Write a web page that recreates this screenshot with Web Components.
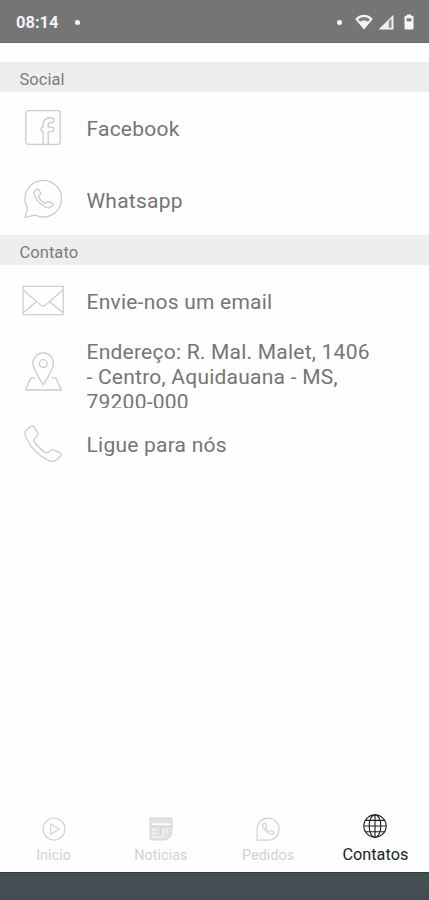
<!DOCTYPE html>
<html lang="pt-BR">
<head>
<meta charset="utf-8">
<title>Contatos</title>
<style>
html,body{margin:0;height:100%;background:#fefefe;overflow:hidden}
</style>
</head>
<body>
<contact-app></contact-app>
<script>
const HANDSET = 'M9 3.2 L4 7.3 C2 9.5 3.2 13 5 16.5 C9 24.5 16.5 32 24 36.3 C29 39 32.5 39.3 35 36.5 L38.6 33 C39.6 31.5 38.8 30.2 37.3 29.3 L31.5 27 C29.5 26.3 28.3 27 27.2 28.6 C26.2 30.2 24.7 30.4 23 29.3 C18.5 26.5 15 22.8 12.3 18.6 C11.3 17 11.5 16 12.8 14.9 L15.4 12.8 C16.4 11.8 16.3 10.6 15.7 9.4 L12 3.8 C11.2 2.6 10.1 2.4 9 3.2 Z';
const ICONS = {
  facebook: ['0 0 42 42', '<g fill="none" stroke="currentColor" stroke-width="1.3"><rect x="3.8" y="3.7" width="34.4" height="33.6" rx="2.5"/><path d="M21.2 37V24.9Q19 24.6 19 22.5T21.2 20.2V18c0-4.8 2.5-7 6.3-7h2.4q2.2.2 2.2 2.3T30 15.6h-1.8c-1.6 0-2.1.6-2.1 2.4v2.1h3.8q2 .2 1.9 2.3t-2.2 2.3h-3.4v12.4"/></g>'],
  whatsapp: ['0 0 42 42', '<path d="M3.1 39.4 5.5 30A18.3 18.3 0 1 1 13.3 37.2Z" fill="none" stroke="currentColor" stroke-width="1.3" stroke-linejoin="round"/><path transform="translate(10.2 9.5) scale(.53)" d="' + HANDSET + '" fill="none" stroke="currentColor" stroke-width="2.5"/>'],
  email: ['0 0 42 42', '<g fill="none" stroke="currentColor" stroke-width="1.2"><rect x="1" y="6.3" width="40.2" height="28.4"/><path d="M1.5 10 17.8 24.4Q21.2 27.2 24.5 24.4L40.7 10M1.5 32.5 14.5 21.8M40.7 32.5 27.6 21.8"/></g>'],
  map: ['0 0 42 42', '<g fill="none" stroke="currentColor" stroke-width="1.3" stroke-linejoin="round"><path d="M21.2 33.6C17 26.5 10.9 18.5 10.9 12.2a10.3 10.3 0 0 1 20.6 0C31.5 18.5 25.4 26.5 21.2 33.6Z"/><circle cx="21.2" cy="12.6" r="3.9"/><path d="M13 26.9H8.8L3.3 39h36L33.8 26.9H29.4"/></g>'],
  phone: ['0 0 42 42', '<path d="' + HANDSET + '" fill="none" stroke="currentColor" stroke-width="1.3" stroke-linejoin="round"/>'],
  play: ['0 0 24 24', '<g fill="none" stroke="currentColor" stroke-width="1.2" stroke-linejoin="round"><circle cx="12" cy="12" r="11"/><path d="M8.7 6.8v10.4l8.8-5.2Z"/></g>'],
  news: ['0 0 24 24', '<path d="M1 1H23V16Q22 21 17 23H2.5Q1 23 1 21Z" fill="currentColor" opacity=".65"/><path d="M3 7.3H21" stroke="#fefefe" stroke-width="1.7"/><path d="M3 12.8h5M3 16.5h5M3 20h11M14.2 11v8M18 12v5" stroke="#fefefe" stroke-width=".9" fill="none"/><path d="M1 1H23V16Q22 21 17 23H2.5Q1 23 1 21ZM1 9.5H23M11.5 10v8" fill="none" stroke="currentColor" stroke-width=".9"/>'],
  chat: ['0 0 42 42', '<path d="M2 40.5V21A19.3 19.3 0 1 1 21 40.5Z" fill="none" stroke="currentColor" stroke-width="2"/><path transform="translate(9.5 9) scale(.56)" d="' + HANDSET + '" fill="none" stroke="currentColor" stroke-width="3.6"/>'],
  globe: ['0 0 24 24', '<g fill="none" stroke="currentColor" stroke-width="1.15"><circle cx="12" cy="12" r="11.2"/><path d="M12 .8v22.4M.8 12h22.4M2.6 6.3h18.8M2.6 17.7h18.8"/><ellipse cx="12" cy="12" rx="5.8" ry="11.2"/></g>'],
  wifi: ['0 0 18 16', '<path d="M9 15.5 .6 5.5C-.2 4.5 4 .8 9 .8S18.2 4.5 17.4 5.5Z" fill="#f4f4f4"/><path d="M3 5.2Q9 .6 15 5.2L13 7.8Q9 5.2 5 7.8Z" fill="#808080"/>'],
  signal: ['0 0 16 16', '<path d="M.5 15.5 15.5.8V15.5Z" fill="#f0f0f0"/><path d="M10.8 7.2 13.5 4.5V13.8H10.8Z" fill="#8c8c8c"/>'],
  battery: ['0 0 10 16', '<path d="M3 .5h4v1.3h1.2q1.3 0 1.3 1.3v11.1q0 1.3-1.3 1.3H1.8Q.5 15.5.5 14.2V3.1q0-1.3 1.3-1.3H3Z" fill="#f6f6f6"/><path d="M2.6 4.3H7.4V7.4H2.6Z" fill="#777"/>']
};

function define(name, css, html, setup) {
  const template = document.createElement('template');
  template.innerHTML = '<style>' + css + '</style>' + html;
  customElements.define(name, class extends HTMLElement {
    connectedCallback() {
      if (this.shadowRoot) return;
      this.attachShadow({mode: 'open'}).append(template.content.cloneNode(true));
      if (setup) setup(this, this.shadowRoot);
    }
  });
}

function insertIcon(host, root) {
  const icon = document.createElement('line-icon');
  icon.setAttribute('name', host.getAttribute('icon'));
  root.querySelector('.icon').replaceWith(icon);
}

define('line-icon', ':host{display:block;width:42px;height:42px;flex:none}svg{display:block;width:100%;height:100%}',
  '<svg aria-hidden="true"></svg>', (host, root) => {
    const icon = ICONS[host.getAttribute('name')];
    const svg = root.querySelector('svg');
    svg.setAttribute('viewBox', icon[0]);
    svg.innerHTML = icon[1];
  });

define('status-bar', `
  :host{display:flex;align-items:center;box-sizing:border-box;height:43px;padding:2px 15px 0 16px;background:#757575;border-bottom:1px solid #686868;color:#f4f4f4;font:700 16.5px/20px Roboto,sans-serif;flex:none}
  .time{padding-top:2px}
  .dot{width:5px;height:5px;border-radius:50%;background:#f5f5f5}
  .left{margin-left:16px}.right{margin-left:auto}
  .wifi{width:18px;height:16px;margin-left:13px}
  .signal{width:16px;height:16px;margin-left:5px}
  .battery{width:10px;height:16px;margin-left:10px}`,
  '<span class="time"><slot></slot></span><i class="dot left"></i><i class="dot right"></i><line-icon class="wifi" name="wifi"></line-icon><line-icon class="signal" name="signal"></line-icon><line-icon class="battery" name="battery"></line-icon>');

define('section-title', ':host{display:block;box-sizing:border-box;height:30px;padding:5px 20px 0 19.5px;background:#eee;color:#7c7c7c;font:400 16.5px/25px Roboto,sans-serif;letter-spacing:.05px;flex:none}', '<slot></slot>');

define('contact-row', `
  :host{display:flex;align-items:center;box-sizing:border-box;height:71.6px;padding:0 50px 0 22px;gap:22.5px;color:#757575;font:400 21px/25px Roboto,sans-serif;letter-spacing:.23px;overflow:hidden;flex:none}
  line-icon{color:#cbcbcb}
  .text{padding-top:3px}
  :host([tall]){align-items:flex-start}
  :host([tall]) line-icon{margin-top:14px}
  :host([icon=whatsapp]) .text{padding-top:4px}`,
  '<span class="icon"></span><div class="text"><slot></slot></div>', insertIcon);

define('nav-item', `
  :host{display:flex;flex-direction:column;align-items:center;flex:1 1 0;color:#d2d2d2;font:400 14.3px/18px Roboto,sans-serif;letter-spacing:.1px;padding-top:5px;gap:5px}
  line-icon{width:24px;height:24px}
  :host([active]){color:#222;font-size:16.3px;letter-spacing:0;padding-top:2px;gap:8px}`,
  '<span class="icon"></span><span><slot></slot></span>', insertIcon);

define('tab-bar', ':host{display:flex;height:60px;flex:none;background:#fefefe}', '<slot></slot>');

define('contact-app', `
  :host{display:flex;flex-direction:column;height:900px;width:100%;background:#fefefe}
  main{flex:1;padding-top:19px;display:flex;flex-direction:column}
  footer{height:28px;box-sizing:border-box;background:linear-gradient(#445051,#454b55) no-repeat;background-clip:padding-box;border-top:1px solid #303c3d;flex:none}`,
  `<status-bar>08:14</status-bar>
  <main>
    <section-title>Social</section-title>
    <contact-row icon="facebook">Facebook</contact-row>
    <contact-row icon="whatsapp">Whatsapp</contact-row>
    <section-title>Contato</section-title>
    <contact-row icon="email">Envie-nos um email</contact-row>
    <contact-row icon="map" tall>Endereço: R. Mal. Malet, 1406<br>- Centro, Aquidauana - MS,<br>79200-000</contact-row>
    <contact-row icon="phone">Ligue para nós</contact-row>
  </main>
  <tab-bar>
    <nav-item icon="play">Inicio</nav-item>
    <nav-item icon="news">Noticias</nav-item>
    <nav-item icon="chat">Pedidos</nav-item>
    <nav-item icon="globe" active>Contatos</nav-item>
  </tab-bar>
  <footer></footer>`);
</script>
</body>
</html>
